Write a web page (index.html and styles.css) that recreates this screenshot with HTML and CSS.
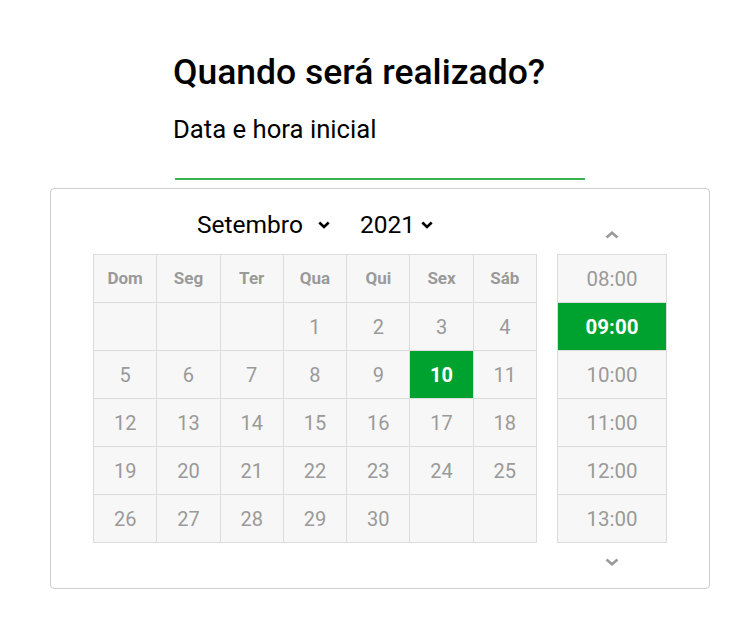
FILE: index.html
```html
<!DOCTYPE html>
<html lang="pt-BR">
<head>
<meta charset="utf-8">
<title>Quando será realizado?</title>
<link rel="stylesheet" href="styles.css">
</head>
<body>
<main class="page">
  <section class="form">
    <h1 class="title">Quando será realizado?</h1>
    <label class="label">Data e hora inicial</label>
    <div class="input"></div>
  </section>

  <div class="picker">
    <div class="calendar">
      <div class="selects">
        <div class="select month">
          <span>Setembro</span>
          <svg class="caret" width="12" height="8" viewBox="0 0 12 8"><polyline points="1.3,1.5 6,6 10.7,1.5" fill="none" stroke="#000" stroke-width="2.6"/></svg>
        </div>
        <div class="select year">
          <span>2021</span>
          <svg class="caret" width="12" height="8" viewBox="0 0 12 8"><polyline points="1.3,1.5 6,6 10.7,1.5" fill="none" stroke="#000" stroke-width="2.6"/></svg>
        </div>
      </div>
      <div class="grid">
        <div class="cell head">Dom</div>
        <div class="cell head">Seg</div>
        <div class="cell head">Ter</div>
        <div class="cell head">Qua</div>
        <div class="cell head">Qui</div>
        <div class="cell head">Sex</div>
        <div class="cell head">Sáb</div>

        <div class="cell"></div>
        <div class="cell"></div>
        <div class="cell"></div>
        <div class="cell">1</div>
        <div class="cell">2</div>
        <div class="cell">3</div>
        <div class="cell">4</div>

        <div class="cell">5</div>
        <div class="cell">6</div>
        <div class="cell">7</div>
        <div class="cell">8</div>
        <div class="cell">9</div>
        <div class="cell selected">10</div>
        <div class="cell">11</div>

        <div class="cell">12</div>
        <div class="cell">13</div>
        <div class="cell">14</div>
        <div class="cell">15</div>
        <div class="cell">16</div>
        <div class="cell">17</div>
        <div class="cell">18</div>

        <div class="cell">19</div>
        <div class="cell">20</div>
        <div class="cell">21</div>
        <div class="cell">22</div>
        <div class="cell">23</div>
        <div class="cell">24</div>
        <div class="cell">25</div>

        <div class="cell">26</div>
        <div class="cell">27</div>
        <div class="cell">28</div>
        <div class="cell">29</div>
        <div class="cell">30</div>
        <div class="cell"></div>
        <div class="cell"></div>
      </div>
    </div>

    <div class="times">
      <div class="arrow up">
        <svg width="14" height="8" viewBox="0 0 14 8"><polyline points="1.5,6.5 7,1.8 12.5,6.5" fill="none" stroke="#9a9a9a" stroke-width="2.6"/></svg>
      </div>
      <ul class="time-list">
        <li class="time">08:00</li>
        <li class="time selected">09:00</li>
        <li class="time">10:00</li>
        <li class="time">11:00</li>
        <li class="time">12:00</li>
        <li class="time">13:00</li>
      </ul>
      <div class="arrow down">
        <svg width="14" height="8" viewBox="0 0 14 8"><polyline points="1.5,1.5 7,6.2 12.5,1.5" fill="none" stroke="#9a9a9a" stroke-width="2.6"/></svg>
      </div>
    </div>
  </div>
</main>
</body>
</html>
```

FILE: styles.css
```css
* { box-sizing: border-box; }

html, body {
  margin: 0;
  padding: 0;
  background: #fff;
}

body {
  font-family: Roboto, "Liberation Sans", Arial, sans-serif;
  color: #000;
}

.page {
  padding: 52px 0 0 50px;
}

.form {
  margin-left: 123px;
  width: 412px;
  display: flex;
  flex-direction: column;
}

.title {
  margin: 0;
  font-size: 35.5px;
  line-height: 40px;
  font-weight: 500;
}

.label {
  margin-top: 23px;
  font-size: 25.7px;
  line-height: 28px;
  font-weight: 400;
}

.input {
  height: 37px;
  margin-left: 2px;
  border-bottom: 2px solid #39b24f;
}

.picker {
  margin-top: 8px;
  width: 660px;
  border: 1px solid #cfcfcf;
  border-radius: 4px;
  padding: 15px 42px 22px 42px;
  display: flex;
  align-items: flex-start;
  gap: 20px;
}

.calendar {
  width: 444px;
  display: flex;
  flex-direction: column;
}

.selects {
  height: 40px;
  margin-bottom: 10px;
  display: flex;
  justify-content: center;
  align-items: center;
  gap: 30px;
  font-size: 24.5px;
}

.select {
  display: flex;
  align-items: center;
}

.month .caret { margin-left: 15px; margin-top: 2px; }
.year .caret { margin-left: 6px; margin-top: 2px; }

.grid {
  display: grid;
  grid-template-columns: repeat(7, 1fr);
  border-top: 1px solid #dcdcdc;
  border-left: 1px solid #dcdcdc;
}

.cell {
  height: 48px;
  background: #f7f7f7;
  border-right: 1px solid #dcdcdc;
  border-bottom: 1px solid #dcdcdc;
  display: flex;
  align-items: center;
  justify-content: center;
  font-size: 20px;
  color: #9a9a9a;
}

.cell.head {
  font-size: 17px;
  font-weight: 700;
  color: #9a9a9a;
  padding-bottom: 2px;
}

.cell.selected {
  background: #00a22f;
  color: #fff;
  font-weight: 700;
}

.times {
  width: 110px;
  display: flex;
  flex-direction: column;
}

.arrow {
  display: flex;
  justify-content: center;
}

.arrow.up {
  height: 40px;
  align-items: flex-end;
  padding-bottom: 5px;
  margin-bottom: 10px;
}

.arrow.down {
  padding-top: 15px;
}

.time-list {
  list-style: none;
  margin: 0;
  padding: 0;
  border-top: 1px solid #dcdcdc;
  border-left: 1px solid #dcdcdc;
  border-right: 1px solid #dcdcdc;
}

.time {
  height: 48px;
  background: #f7f7f7;
  border-bottom: 1px solid #dcdcdc;
  display: flex;
  align-items: center;
  justify-content: center;
  font-size: 20.5px;
  color: #9a9a9a;
}

.time.selected {
  background: #00a22f;
  color: #fff;
  font-weight: 700;
}
```
